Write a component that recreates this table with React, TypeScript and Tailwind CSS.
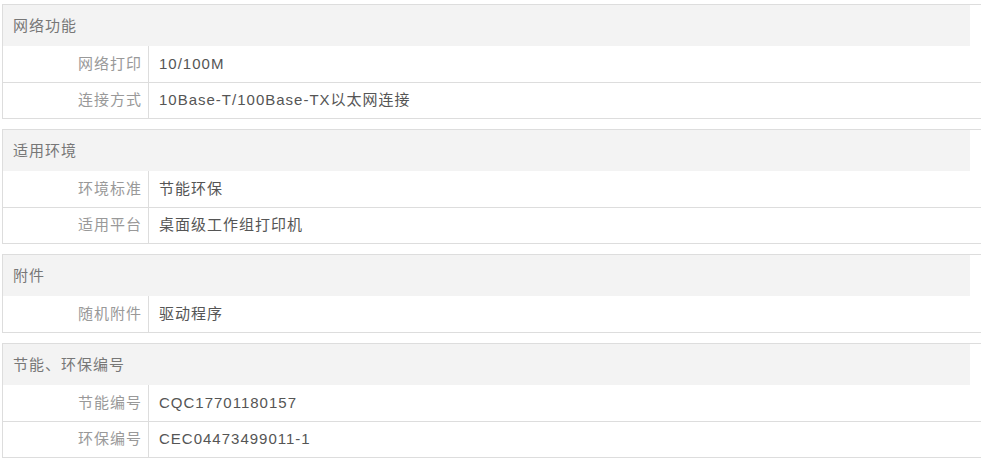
const SECTIONS = [
  {
    title: '网络功能',
    rows: [
      ['网络打印', '10/100M'],
      ['连接方式', '10Base-T/100Base-TX以太网连接'],
    ],
  },
  {
    title: '适用环境',
    rows: [
      ['环境标准', '节能环保'],
      ['适用平台', '桌面级工作组打印机'],
    ],
  },
  {
    title: '附件',
    rows: [['随机附件', '驱动程序']],
  },
  {
    title: '节能、环保编号',
    rows: [
      ['节能编号', 'CQC17701180157'],
      ['环保编号', 'CEC04473499011-1'],
    ],
  },
]

export default function App() {
  return (
    <div
      className="h-[461px] w-[981px] overflow-hidden bg-white pt-[4px] text-[15px] tracking-[1px]"
      style={{ fontFamily: '"Liberation Sans", Arial, "Noto Sans CJK SC", sans-serif' }}
    >
      <div className="ml-[2px] flex w-[1000px] flex-col gap-[10px]">
        {SECTIONS.map((s) => (
          <div key={s.title} className="border border-[#dddddd]">
            <div className="flex h-[41px] w-[967px] items-center bg-[#f3f3f3] pl-[10px] pt-[2px] text-[#777777]">
              {s.title}
            </div>
            {s.rows.map(([k, v], i) => {
              const last = i === s.rows.length - 1
              return (
                <div
                  key={k}
                  className={
                    last
                      ? s.rows.length > 1
                        ? 'flex h-[35px]'
                        : 'flex h-[36px]'
                      : 'flex h-[37px] border-b border-[#dddddd]'
                  }
                >
                  <div className="flex w-[146px] items-center justify-end border-r border-[#dddddd] pr-[6px] text-[#999999]">
                    {k}
                  </div>
                  <div className="flex items-center pl-[10px] text-[#555555]">{v}</div>
                </div>
              )
            })}
          </div>
        ))}
      </div>
    </div>
  )
}
